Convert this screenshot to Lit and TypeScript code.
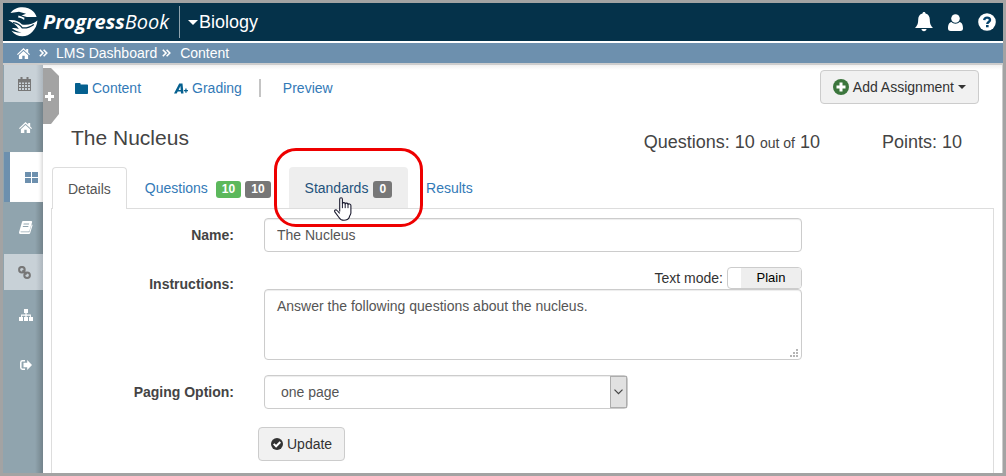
import { LitElement, html, css, svg } from "lit";
import { customElement, state } from "lit/decorators.js";

const icons = {
  logo: svg`<path fill="#fff" d="M2.500 6C7-1 19-1.800 25 4.200c1.800 1.600 3 3.600 3.600 5.800h-9.800l-5.300-1.600 4.500-1.600L11 4.800z"/>
    <path fill="#fff" d="M10.500 8.600l3 1 3 1.200-.4 2.200c-1.700-1.500-3.700-2.200-6-2.400z"/>
    <path fill="#fff" d="M.3 13.300c6-.8 10.500.8 13.700 4.300 6 .8 11-.6 15.400-4.100-.3 4.500-2 8.200-5 11.200-5.500 6-15 6.500-21-1 3.500 1.500 6.800 2 10.100 1.700-4-.6-7.300-2-9.700-4.300 2.400-.3 4.700 0 7 .9-2.300-3.900-6-6.300-10.500-8.700z"/>
    <path fill="none" stroke="#05324a" stroke-width="1.300" d="M5 15.600c4 .4 7.200 2.200 9.300 5.300 4.500.3 8.200-.9 11.500-3.500"/>`,
  bell: svg`<path fill="#fff" d="M9 0c1 0 1.500.6 1.500 1.600 3 .7 4.300 3 4.300 6 0 4.500 1.200 6.500 3.200 8.400H0c2-1.900 3.200-3.900 3.200-8.400 0-3 1.300-5.300 4.300-6C7.500.6 8 0 9 0zM6.500 17h5c0 1.300-1.100 2.200-2.500 2.200S6.500 18.300 6.500 17z"/>`,
  user: svg`<circle cx="7.500" cy="4.500" r="4.300" fill="#fff"/><path fill="#fff" d="M3.500 8c1 1.100 2.300 1.700 4 1.700s3-.6 4-1.700C14 8.300 15 11 15 14.500c0 1.700-1.200 2.500-2.700 2.500H2.700C1.200 17 0 16.200 0 14.500 0 11 1 8.300 3.500 8z"/>`,
  help: svg`<circle cx="9" cy="9" r="8.800" fill="#fff"/><path fill="none" stroke="#05426a" stroke-width="2.400" d="M6.200 7.100c.2-1.600 1.300-2.500 2.900-2.500 1.700 0 2.900.9 2.900 2.300 0 2.100-2.700 2-2.700 4.100"/><path fill="#05426a" d="M8 12h2.600v2.300H8z"/>`,
  home: svg`<path fill="currentColor" d="M6.500 0l2.700 2.600V1h2v3.500L13 6.200l-.8.9-5.700-5.300L.8 7.100 0 6.200zM6.500 2.900l4.600 4.300V11H7.700V7.700H5.300V11H1.900V7.200z"/>`,
  chevrons: svg`<path fill="none" stroke="#fff" stroke-width="1.600" d="M.8.8L4 4 .8 7.200M4.600.8L7.800 4 4.600 7.200"/>`,
  calendar: svg`<path fill="#777" fill-rule="evenodd" d="M0 2h2.500V0h2v2h4V0h2v2H13v12H0zM1 5.500V7h2V5.500zm3 0V7h2V5.500zm3 0V7h2V5.500zm3 0V7h2V5.500zM1 8v2h2V8zm3 0v2h2V8zm3 0v2h2V8zm3 0v2h2V8zM1 11v2h2v-2zm3 0v2h2v-2zm3 0v2h2v-2zm3 0v2h2v-2z"/>`,
  grid: svg`<path fill="#6d90ae" d="M0 0h6v5H0zM7 0h6v5H7zM0 6h6v5H0zM7 6h6v5H7z"/>`,
  book: svg`<path fill="#fff" fill-rule="evenodd" d="M4 0h8.200c.8 0 1.100.5.900 1.200L10.500 9.500c-.2.600-.6.900-1.200.9H2c-.8 0-.9.900 0 .9h8.300l2.400-7.800.6.300c.3.200.2.600.1 1L11.200 12c-.2.600-.7 1-1.300 1H1.700C.5 13-.2 12 .1 10.900L3 1C3.200.4 3.500 0 4 0zm.7 2.500l-.3 1h5.500l.3-1zM4 5l-.3 1h5.500l.3-1z"/>`,
  link: svg`<g fill="none" stroke="#777" stroke-width="2"><circle cx="3.900" cy="3.700" r="2.800"/><circle cx="9.100" cy="9.200" r="2.800"/><path d="M4.500 4.300l4 4.200"/></g>`,
  sitemap: svg`<path fill="#fff" d="M5 0h4v4H7.600v1.600h4.300V8H14v4h-4V8h.9V6.700H7.600V8H9v4H5V8h1.400V6.700H3.100V8H4v4H0V8h2.100V5.600h4.300V4H5z"/>`,
  exit: svg`<path fill="none" stroke="#fff" stroke-width="1.500" d="M5 .8H2.500C1.400.8.8 1.400.8 2.500v5c0 1.100.6 1.700 1.700 1.700H5"/><path fill="#fff" d="M7.200 0L12 5 7.200 10V7.200H3.500V2.800h3.700z"/>`,
  plus: svg`<path fill="#fff" d="M3 0h3v3h3v3H6v3H3V6H0V3h3z"/>`,
  folder: svg`<path fill="#05608f" d="M1 0h3.600c.6 0 1 .4 1 1v.6H12c.6 0 1 .4 1 1V10c0 .6-.4 1-1 1H1c-.6 0-1-.4-1-1V1c0-.6.400-1 1-1z"/>`,
  grade: svg`<path fill="#05608f" fill-rule="evenodd" d="M0 10.500L5.200.5h3.300l1 10H7L6.800 8.600H3.700L2.700 10.500zM4.600 6.900h2.100l-.3-4zM11.300 5.500h1.300V7H14v1.300h-1.400v1.500h-1.300V8.300H9.900V7h1.400z"/>`,
  add: svg`<circle cx="8" cy="8" r="8" fill="#3c763d"/><path fill="#fff" d="M6.500 3.500h3v3h3v3h-3v3h-3v-3h-3v-3h3z"/>`,
  check: svg`<circle cx="6" cy="6" r="6" fill="#333"/><path fill="none" stroke="#fff" stroke-width="2" d="M2.700 5.900l2.400 2.400L9.300 4"/>`,
  caretDown: svg`<path fill="none" stroke="#444" stroke-width="1.200" d="M.5.700l4 4 4-4"/>`,
  hand: svg`<path fill="#fff" stroke="#1a1a2e" stroke-width="1.100" stroke-linejoin="round" d="M5.700 14.500V2.200c0-2 2.700-2 2.700 0V6.500c.4-1.300 2.800-1.200 2.800.4.400-1.200 2.800-1 2.800.6.400-1 2.900-.7 2.900.9V16c0 1.500-1.600 3-1.600 4.300-.9 2-2.800 3-5.300 3s-4-.9-5-2.800L.8 14.900c-.8-1.900 1.200-2.700 2.300-1.400l2.600 2.800"/><path stroke="#1a1a2e" d="M8.400 6.500v4.700M11.200 7v4.200M14 7.500v3.700"/>`,
};

const icon = (name: keyof typeof icons, w: number, h: number) =>
  html`<svg width=${w} height=${h} viewBox="0 0 ${w} ${h}" aria-hidden="true">${icons[name]}</svg>`;

@customElement("app-root")
export class AppRoot extends LitElement {
  @state() private plain = true;

  static styles = css`
    :host { display: block; font: 14px/20px "Liberation Sans", Arial, sans-serif; color: #444; }
    * { box-sizing: border-box; }
    svg { display: block; flex: none; }
    a { color: #337ab7; text-decoration: none; }
    button, input, textarea, select { font: inherit; color: inherit; margin: 0; }
    ul { list-style: none; margin: 0; padding: 0; }
    .frame { display: flex; flex-direction: column; min-height: 100vh; border: 3px solid #a3a3a3; background: #fff; }
    .topbar { display: flex; align-items: center; height: 38px; padding: 0 7px 0 5px; background: #05324a; color: #fff; }
    .brand { display: flex; align-items: center; gap: 5px; color: #fff; }
    .wordmark { font: italic 700 20px/30px "Open Sans", "Noto Sans", sans-serif; }
    .wordmark span { font-weight: 400; }
    .rule { width: 1px; height: 32px; margin: 0 8px 0 10px; background: #8fa3ae; }
    .course { display: flex; align-items: center; gap: 1px; padding: 0; border: 0; background: none; font-size: 18px; color: #fff; }
    .caret { border: solid transparent; border-width: 4px 4px 0; border-top-color: currentColor; }
    .caret.big { border-width: 5px 5px 0; }
    .tools { display: flex; align-items: center; gap: 15px; margin-left: auto; }
    .crumbs { display: flex; align-items: center; gap: 9px; height: 24px; padding: 0 14px; border: solid #ccc; border-width: 2px 0; border-top-color: #fff; background: #6d90ae; }
    .crumbs a { color: #fff; }
    .crumbs .text { margin: 0 -4px 0 -1px; }
    .body { display: flex; flex: 1; border-right: 1px solid #ccc; }
    .side { width: 40px; flex: none; padding-left: 1px; background: linear-gradient(to right, transparent 32px, #0003 40px), #90a4ae; }
    .side a { display: flex; align-items: center; justify-content: center; height: 50px; padding-left: 4px; color: #fff; }
    .side .pale { height: 36px; padding-left: 2px; background: linear-gradient(to right, #c8d1d7 32px, #aeb7be); }
    .side .links { margin-top: 2px; }
    .side .first { height: 37px; }
    .side .active { padding: 0 0 0 10px; border-left: 6px solid #6d90ae; background: #fff; box-shadow: inset -4px 0 4px -3px #0003; }
    .handle { display: flex; align-items: center; justify-content: center; position: absolute; left: 0; top: 3px; width: 16px; height: 56px; padding: 0 3px 0 0; border: 0; background: #a3a3a3; clip-path: polygon(0 0, 50% 0, 100% 8px, 100% 46px, 50% 100%, 0 100%); }
    main { position: relative; flex: 1; display: flex; flex-direction: column; min-width: 0; padding: 5px 8px 0; background: linear-gradient(#f0f0f0, #fff 5px); }
    .actions { display: flex; align-items: center; padding: 0 15px 0 24px; }
    .actions a { display: flex; align-items: center; gap: 4px; margin-right: 33px; padding-top: 2px; }
    .bar { width: 2px; height: 18px; margin: 2px 22px 0 -16px; background: #c4c4c4; }
    .btn { display: flex; align-items: center; gap: 4px; height: 34px; padding: 0 12px; border: 1px solid #ccc; border-radius: 4px; background: #f1f1f1; color: #333; }
    .actions .btn { margin-left: auto; }
    .heading { display: flex; padding: 22px 32px 13px 20px; }
    h1 { margin: 0; font: 21px/24px "Liberation Sans", Arial, sans-serif; }
    .stats { display: flex; gap: 62px; margin-left: auto; padding-top: 5px; font-size: 18px; line-height: 22px; }
    .stats small { font-size: 14px; }
    .tabs { display: flex; gap: 2px; padding-left: 1px; }
    .tabs li { position: relative; }
    .tab { display: flex; align-items: center; gap: 4px; height: 41px; padding: 0 15px; border: 1px solid transparent; border-bottom: 0; border-radius: 4px 4px 0 0; }
    .tab.on { height: 42px; margin-bottom: -1px; border-color: #ddd; background: #fff; color: #555; }
    .tab.hover { gap: 5px; background: #eee; color: #23527c; }
    .badge { margin-top: 3px; padding: 0 6px; border-radius: 3px; background: #777; color: #fff; font-size: 12px; font-weight: 700; line-height: 17px; }
    .badge.ok { margin-left: 4px; background: #5cb85c; }
    .ring { position: absolute; inset: -19px -15px; border: 3px solid #ee0000; border-radius: 22px; z-index: 1; pointer-events: none; }
    .pointer { position: absolute; left: 45px; top: 30px; z-index: 2; pointer-events: none; }
    .pane { flex: 1; padding: 9px 0 11px; border: 1px solid #ddd; border-bottom: 0; }
    .form { display: grid; grid-template-columns: 182px minmax(0, 538px); gap: 15px 30px; }
    .form > label { padding-top: 7px; text-align: right; font-weight: 700; }
    .field { display: block; width: 100%; height: 34px; padding: 0 12px; border: 1px solid #ccc; border-radius: 4px; background: #fff; color: #555; box-shadow: inset 0 1px 1px #00000013; }
    .area { position: relative; }
    textarea.field { height: 71px; padding: 6px 12px; resize: none; }
    .grip { position: absolute; right: 4px; bottom: 3px; pointer-events: none; }
    .mode { display: flex; justify-content: flex-end; align-items: center; gap: 4px; color: #333; }
    .switch { display: flex; width: 75px; height: 22px; padding: 0; overflow: hidden; border: 1px solid #ccc; border-radius: 4px; background: #fff; color: #000; font-size: 13px; line-height: 20px; }
    .switch span { flex: 1; margin-left: 13px; background: #eee; }
    .select { position: relative; width: 364px; max-width: 100%; }
    .select select { appearance: none; padding: 0 16px; }
    .arrow { display: flex; align-items: center; justify-content: center; position: absolute; right: 1px; top: 1px; bottom: 1px; width: 17px; border: 1px solid #adadad; background: #e1e1e1; pointer-events: none; }
    .submit { margin: 18px 0 0 206px; }
  `;

  render() {
    return html`<div class="frame">
      <header class="topbar">
        <a class="brand" href="#">${icon("logo", 30, 30)}<span class="wordmark">Progress<span>Book</span></span></a>
        <div class="rule"></div>
        <button class="course"><i class="caret big"></i>Biology</button>
        <div class="tools">
          <a href="#" aria-label="Notifications">${icon("bell", 18, 20)}</a>
          <a href="#" aria-label="Account">${icon("user", 15, 17)}</a>
          <a href="#" aria-label="Help">${icon("help", 18, 18)}</a>
        </div>
      </header>
      <nav class="crumbs" aria-label="Breadcrumb">
        <a href="#" aria-label="Home">${icon("home", 13, 11)}</a>${icon("chevrons", 9, 8)}
        <a class="text" href="#">LMS Dashboard</a>${icon("chevrons", 9, 8)}
        <a href="#">Content</a>
      </nav>
      <div class="body">
        <nav class="side" aria-label="Course tools">
          <a class="pale first" href="#" aria-label="Calendar">${icon("calendar", 13, 14)}</a>
          <a href="#" aria-label="Home">${icon("home", 13, 11)}</a>
          <a class="active" href="#" aria-label="Dashboard">${icon("grid", 13, 11)}</a>
          <a href="#" aria-label="Gradebook">${icon("book", 14, 13)}</a>
          <a class="pale links" href="#" aria-label="Links">${icon("link", 13, 13)}</a>
          <a href="#" aria-label="Site map">${icon("sitemap", 14, 12)}</a>
          <a href="#" aria-label="Exit">${icon("exit", 12, 10)}</a>
        </nav>
        <main>
          <button class="handle" aria-label="Expand">${icon("plus", 9, 9)}</button>
          <div class="actions">
            <a href="#">${icon("folder", 13, 11)}Content</a>
            <a href="#">${icon("grade", 14, 11)}Grading</a>
            <div class="bar"></div>
            <a href="#">Preview</a>
            <button class="btn">${icon("add", 16, 16)}Add Assignment<i class="caret"></i></button>
          </div>
          <div class="heading">
            <h1>The Nucleus</h1>
            <div class="stats"><span>Questions: 10 <small>out of</small> 10</span><span>Points: 10</span></div>
          </div>
          <ul class="tabs">
            <li><a class="tab on" href="#">Details</a></li>
            <li><a class="tab" href="#">Questions <span class="badge ok">10</span><span class="badge">10</span></a></li>
            <li>
              <a class="tab hover" href="#">Standards <span class="badge">0</span></a>
              <div class="ring"></div>
              <div class="pointer">${icon("hand", 18, 24)}</div>
            </li>
            <li><a class="tab" href="#">Results</a></li>
          </ul>
          <section class="pane">
            <div class="form">
              <label for="name">Name:</label>
              <input class="field" id="name" .value=${"The Nucleus"} />
              <label for="instructions">Instructions:</label>
              <div class="area">
                <div class="mode">
                  <label for="mode">Text mode:</label>
                  <button class="switch" id="mode" role="switch" aria-checked=${this.plain} @click=${() => (this.plain = !this.plain)}>
                    <span>${this.plain ? "Plain" : "Rich"}</span>
                  </button>
                </div>
                <textarea class="field" id="instructions" .value=${"Answer the following questions about the nucleus."}></textarea>
                <svg class="grip" width="8" height="8" viewBox="0 0 8 8" aria-hidden="true"><path fill="#b5b5b5" d="M6 0h2v2H6zM3 3h2v2H3zM6 3h2v2H6zM0 6h2v2H0zM3 6h2v2H3zM6 6h2v2H6z"/></svg>
              </div>
              <label for="paging">Paging Option:</label>
              <div class="select">
                <select class="field" id="paging"><option>one page</option></select>
                <div class="arrow">${icon("caretDown", 9, 6)}</div>
              </div>
            </div>
            <button class="btn submit">${icon("check", 12, 12)}Update</button>
          </section>
        </main>
      </div>
    </div>`;
  }
}
